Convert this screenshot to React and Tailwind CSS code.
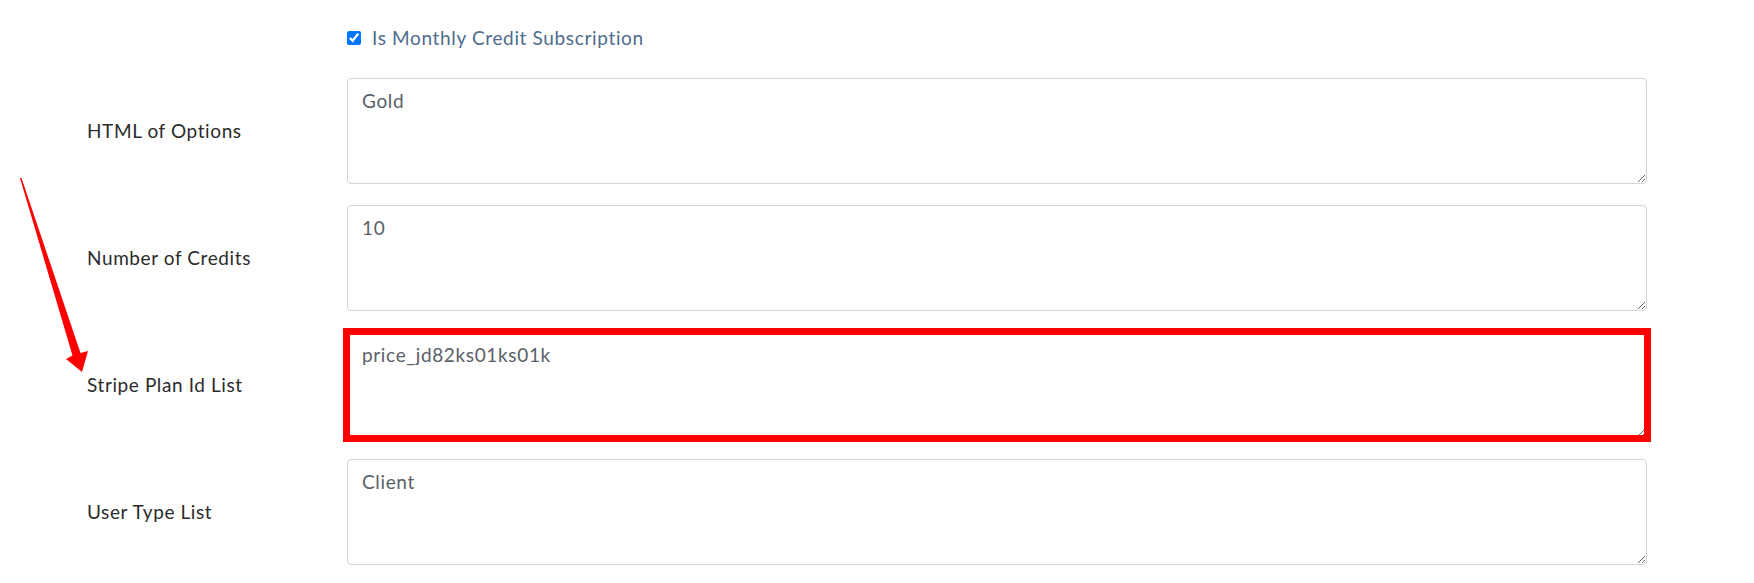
import { useState } from "react";

const fields = [
  { label: "HTML of Options", value: "Gold" },
  { label: "Number of Credits", value: "10" },
  { label: "Stripe Plan Id List", value: "price_jd82ks01ks01k", marked: true },
  { label: "User Type List", value: "Client" },
];

function Arrow() {
  return (
    <svg
      className="absolute left-0 top-0 pointer-events-none"
      width="100"
      height="380"
      viewBox="0 0 100 380"
    >
      <polygon
        points="20,178 21.5,178 80.5,353 88,351 82,372 66,359 72.5,355.5"
        fill="#ff0000"
      />
    </svg>
  );
}

export default function App() {
  const [monthly, setMonthly] = useState(true);

  return (
    <div
      className="relative min-h-[583px] bg-white text-[#2b2b2b]"
      style={{ fontFamily: "Lato, 'Noto Sans', sans-serif" }}
    >
      <Arrow />
      <div className="pl-[87px] pt-[26px]">
        <div className="grid grid-cols-[260px_1300px] gap-y-[21px]">
          <div />
          <label className="flex items-center h-[24px] mb-[7px] cursor-pointer">
            <input
              type="checkbox"
              checked={monthly}
              onChange={(e) => setMonthly(e.target.checked)}
              className="w-[14px] h-[14px] m-0 accent-[#0075ff]"
            />
            <span className="ml-[11px] text-[19px] text-[#4f6c8c] tracking-[0.65px]">
              Is Monthly Credit Subscription
            </span>
          </label>

          {fields.map((f) => (
            <div key={f.label} className="contents">
              <div className="flex items-center text-[19px] text-[#2b2b2b] tracking-[0.6px]">
                {f.label}
              </div>
              <div className="relative h-[106px]">
                <textarea
                  defaultValue={f.value}
                  className="block w-full h-full rounded-[4px] border border-[#ced4da] px-[14px] pt-[8px] text-[19px] leading-[28px] tracking-[0.65px] text-[#5a6067] outline-none"
                />
                {f.marked && (
                  <div className="absolute -inset-[4px] border-[7px] border-[#ff0000] pointer-events-none" />
                )}
              </div>
            </div>
          ))}
        </div>
      </div>
    </div>
  );
}
